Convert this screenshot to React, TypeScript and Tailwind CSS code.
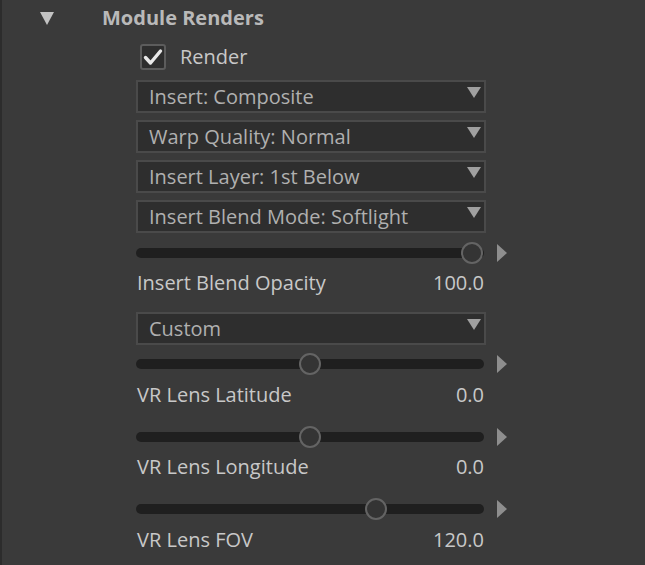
import React from 'react'

const font = { fontFamily: '"Open Sans", "Noto Sans", sans-serif' }

function Dropdown({ label, className = '' }: { label: string; className?: string }) {
  return (
    <div
      className={`relative h-[33px] w-[350px] border-2 border-[#4a4a4a] bg-[#2e2e2e] pl-[11px] flex items-center text-[20px] text-[#b0b0b0] ${className}`}
    >
      <span className="leading-none">{label}</span>
      <svg className="absolute right-[3px] top-[5px]" width="14" height="11" viewBox="0 0 14 11">
        <polygon points="0,0 14,0 7,11" fill="#a0a0a0" />
      </svg>
    </div>
  )
}

function Slider({ pos, className = '' }: { pos: number; className?: string }) {
  return (
    <div className={`flex items-center h-[22px] ${className}`}>
      <div className="relative w-[348px] h-[10px] rounded-full bg-[#1f1f1f]">
        <div
          className="absolute top-1/2 -translate-x-1/2 -translate-y-1/2 w-[22px] h-[22px] rounded-full border-2 border-[#646464] bg-[#343434]"
          style={{ left: `${pos}px` }}
        />
      </div>
      <svg className="ml-[13px]" width="10" height="18" viewBox="0 0 10 18">
        <polygon points="0,0 10,9 0,18" fill="#8e8e8e" />
      </svg>
    </div>
  )
}

function ValueRow({ label, value, className = '' }: { label: string; value: string; className?: string }) {
  return (
    <div className={`flex items-center justify-between w-[348px] h-[24px] text-[20px] text-[#c8c8c8] ${className}`}>
      <span className="pl-[1px]">{label}</span>
      <span>{value}</span>
    </div>
  )
}

export default function App() {
  return (
    <div className="w-[645px] h-[565px] bg-[#3a3a3a] border-l-2 border-[#2c2c2c] overflow-hidden" style={font}>
      {/* Header */}
      <div className="flex items-center h-[36px]">
        <svg className="ml-[38px]" width="14" height="13" viewBox="0 0 14 13">
          <polygon points="0,0 14,0 7,13" fill="#c2c2c2" />
        </svg>
        <span className="ml-[48px] text-[20px] font-bold text-[#b9b9b9]">Module Renders</span>
      </div>

      <div className="flex flex-col pl-[134px]">
        {/* Checkbox */}
        <div className="flex items-center h-[26px] mt-[8px]">
          <div className="ml-[4px] w-[26px] h-[26px] rounded-[3px] border-2 border-[#5c5c5c] bg-[#2e2e2e] flex items-center justify-center">
            <svg width="20" height="18" viewBox="0 0 20 18">
              <path d="M2.5 9.5 L7.5 15 L17.5 3" stroke="#e8e8e8" strokeWidth="3.4" fill="none" strokeLinecap="round" strokeLinejoin="round" />
            </svg>
          </div>
          <span className="ml-[14px] text-[20px] text-[#c8c8c8]">Render</span>
        </div>

        <Dropdown label="Insert: Composite" className="mt-[10px]" />
        <Dropdown label="Warp Quality: Normal" className="mt-[7px]" />
        <Dropdown label="Insert Layer: 1st Below" className="mt-[7px]" />
        <Dropdown label="Insert Blend Mode: Softlight" className="mt-[7px]" />

        <Slider pos={336} className="mt-[9px]" />
        <ValueRow label="Insert Blend Opacity" value="100.0" className="mt-[7px]" />

        <Dropdown label="Custom" className="mt-[17px]" />
        <Slider pos={174} className="mt-[8px]" />
        <ValueRow label="VR Lens Latitude" value="0.0" className="mt-[8px]" />

        <Slider pos={174} className="mt-[19px]" />
        <ValueRow label="VR Lens Longitude" value="0.0" className="mt-[7px]" />

        <Slider pos={240} className="mt-[19px]" />
        <ValueRow label="VR Lens FOV" value="120.0" className="mt-[8px]" />
      </div>
    </div>
  )
}
